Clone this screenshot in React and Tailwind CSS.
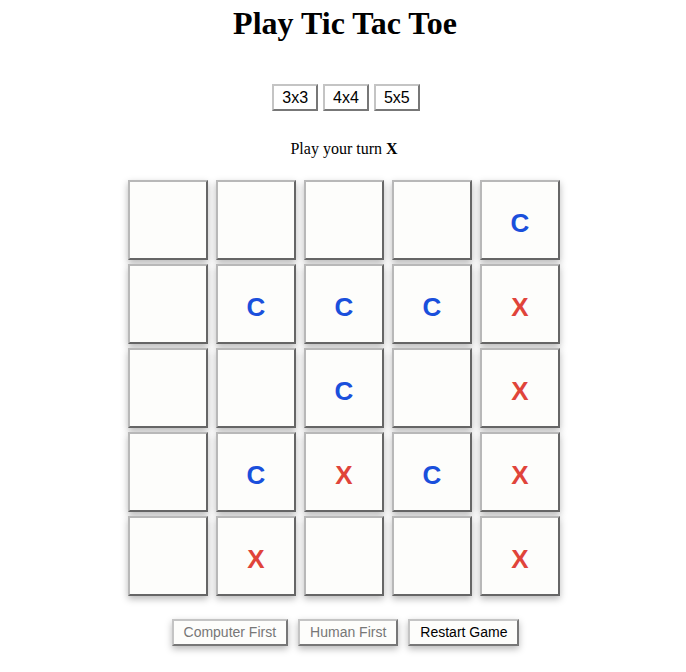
import React from "react";

const board = [
  ["", "", "", "", "C"],
  ["", "C", "C", "C", "X"],
  ["", "", "C", "", "X"],
  ["", "C", "X", "C", "X"],
  ["", "X", "", "", "X"],
];

const Cell = ({ value }) => {
  return (
    <div className="w-[80px] h-[80px] flex items-center justify-center bg-[#fdfdfb] border-2 border-t-[#b8b8b8] border-l-[#b8b8b8] border-r-[#666] border-b-[#666] shadow-[0_3px_7px_rgba(0,0,0,0.28)]">
      <span
        className={
          "pt-[6px] text-[26px] font-bold font-['Liberation_Sans',Arial,sans-serif] " +
          (value === "C" ? "text-[#1a4fdc]" : "text-[#e0443a]")
        }
      >
        {value}
      </span>
    </div>
  );
};

const SizeButton = ({ label }) => {
  return (
    <button className="h-[27px] px-2 flex items-center bg-white text-[16px] text-black font-['Liberation_Sans',Arial,sans-serif] border-2 border-t-[#c4c4c4] border-l-[#c4c4c4] border-r-[#777] border-b-[#777]">
      {label}
    </button>
  );
};

const ActionButton = ({ label, muted }) => {
  return (
    <button
      className={
        "h-[27px] px-[10px] flex items-center bg-[#fdfdfb] text-[14px] font-['Liberation_Sans',Arial,sans-serif] border-2 border-t-[#c4c4c4] border-l-[#c4c4c4] border-r-[#777] border-b-[#777] shadow-[0_3px_7px_rgba(0,0,0,0.28)] " +
        (muted ? "text-[#777]" : "text-black")
      }
    >
      {label}
    </button>
  );
};

export default function App() {
  return (
    <div className="w-[686px] h-[672px] pl-[2px] bg-white flex flex-col items-center font-['Liberation_Serif','Times_New_Roman',serif]">
      <h1 className="pt-[5px] ml-[2px] text-[32px] leading-[37px] font-bold text-black">
        Play Tic Tac Toe
      </h1>

      <div className="mt-[42px] ml-[4px] flex gap-[5px]">
        <SizeButton label="3x3" />
        <SizeButton label="4x4" />
        <SizeButton label="5x5" />
      </div>

      <p className="mt-[29px] text-[16px] leading-[18px] text-black">
        Play your turn <b>X</b>
      </p>

      <div className="mt-[22px] flex flex-col gap-y-1">
        {board.map((row, r) => (
          <div key={r} className="flex gap-x-2">
            {row.map((v, c) => (
              <Cell key={c} value={v} />
            ))}
          </div>
        ))}
      </div>

      <div className="mt-[23px] ml-[3px] flex gap-[10px]">
        <ActionButton label="Computer First" muted />
        <ActionButton label="Human First" muted />
        <ActionButton label="Restart Game" />
      </div>
    </div>
  );
}
